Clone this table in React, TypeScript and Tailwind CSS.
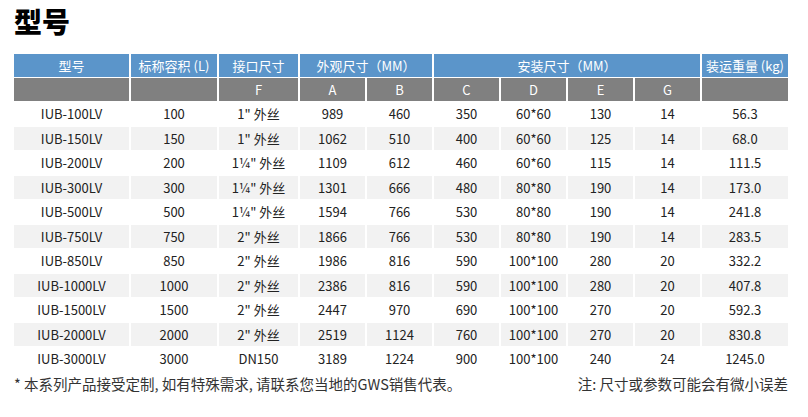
const rows = [
  ["IUB-100LV", "100", "1\" 外丝", "989", "460", "350", "60*60", "130", "14", "56.3"],
  ["IUB-150LV", "150", "1\" 外丝", "1062", "510", "400", "60*60", "125", "14", "68.0"],
  ["IUB-200LV", "200", "1¼\" 外丝", "1109", "612", "460", "60*60", "115", "14", "111.5"],
  ["IUB-300LV", "300", "1¼\" 外丝", "1301", "666", "480", "80*80", "190", "14", "173.0"],
  ["IUB-500LV", "500", "1¼\" 外丝", "1594", "766", "530", "80*80", "190", "14", "241.8"],
  ["IUB-750LV", "750", "2\" 外丝", "1866", "766", "530", "80*80", "190", "14", "283.5"],
  ["IUB-850LV", "850", "2\" 外丝", "1986", "816", "590", "100*100", "280", "20", "332.2"],
  ["IUB-1000LV", "1000", "2\" 外丝", "2386", "816", "590", "100*100", "280", "20", "407.8"],
  ["IUB-1500LV", "1500", "2\" 外丝", "2447", "970", "690", "100*100", "270", "20", "592.3"],
  ["IUB-2000LV", "2000", "2\" 外丝", "2519", "1124", "760", "100*100", "270", "20", "830.8"],
  ["IUB-3000LV", "3000", "DN150", "3189", "1224", "900", "100*100", "240", "24", "1245.0"],
];

const subHeads = ["", "", "F", "A", "B", "C", "D", "E", "G", ""];

export default function App() {
  return (
    <div
      className="w-[808px] h-[417px] bg-white px-[14px] pt-[4px] text-[#222]"
      style={{ fontFamily: '"Noto Sans CJK SC", "Noto Sans", sans-serif' }}
    >
      <h1 className="text-[28px] font-black leading-[34px] text-black">型号</h1>

      <div className="mt-[16px] w-[774px] grid grid-cols-[115px_86px_79px_65px_65px_65px_65px_65px_65px_86px] gap-x-[2px] gap-y-[1px] text-[13px]">
        {/* blue header */}
        <div className="h-[23px] bg-[#5b95ca] text-white flex items-center justify-center">型号</div>
        <div className="h-[23px] bg-[#5b95ca] text-white flex items-center justify-center">标称容积 (L)</div>
        <div className="h-[23px] bg-[#5b95ca] text-white flex items-center justify-center">接口尺寸</div>
        <div className="col-span-2 h-[23px] bg-[#5b95ca] text-white flex items-center justify-center">外观尺寸（MM）</div>
        <div className="col-span-4 h-[23px] bg-[#5b95ca] text-white flex items-center justify-center">安装尺寸（MM）</div>
        <div className="h-[23px] bg-[#5b95ca] text-white flex items-center justify-center">装运重量 (kg)</div>

        {/* gray sub header */}
        {subHeads.map((h, i) => (
          <div key={"s" + i} className="h-[23px] bg-[#808080] text-white flex items-center justify-center">
            {h}
          </div>
        ))}

        {rows.map((r, ri) =>
          r.map((c, ci) => (
            <div
              key={ri + "-" + ci}
              className={
                "h-[23.5px] flex items-center justify-center " + (ri % 2 === 1 ? "bg-[#f2f2f2]" : "bg-white")
              }
            >
              {c}
            </div>
          ))
        )}
      </div>

      <div className="mt-[2px] w-[774px] flex justify-between text-[14.5px] text-[#333]">
        <span>* 本系列产品接受定制, 如有特殊需求, 请联系您当地的GWS销售代表。</span>
        <span>注: 尺寸或参数可能会有微小误差</span>
      </div>
    </div>
  );
}
